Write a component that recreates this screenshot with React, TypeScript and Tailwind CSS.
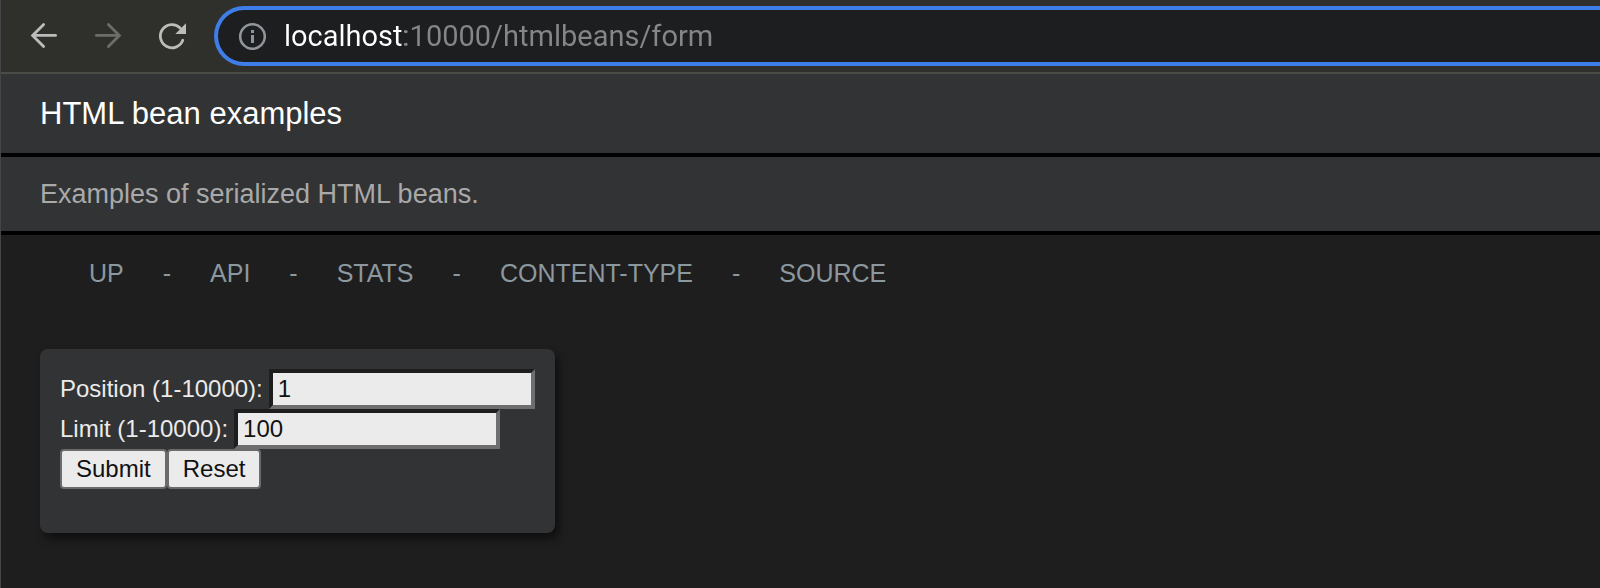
import type { ReactNode } from "react";

const links = ["UP", "API", "STATS", "CONTENT-TYPE", "SOURCE"];

function ToolbarButton({ label, className, children }: { label: string; className: string; children: ReactNode }) {
  return (
    <button type="button" aria-label={label} className={className}>
      <svg viewBox="0 0 32 32" className="size-8" fill="none" stroke="currentColor" strokeWidth="2.8" strokeLinecap="round" aria-hidden="true">
        {children}
      </svg>
    </button>
  );
}

function BrowserBar() {
  return (
    <div className="flex items-center border-b-2 border-[#4b4b48] bg-[#2f2f2c] py-[6px] pl-[27px]">
      <div className="flex shrink-0 gap-8 pr-[26px]">
        <ToolbarButton label="Back" className="text-[#bcbcbb]">
          <path d="M27.6 15.4H4.8M15.6 4.4L4.6 15.4L15.6 26.6" />
        </ToolbarButton>
        <ToolbarButton label="Forward" className="text-[#6c6c6a]">
          <path d="M4.4 15.4H27.2M16.4 4.4L27.4 15.4L16.4 26.6" />
        </ToolbarButton>
        <ToolbarButton label="Reload" className="text-[#bcbcbb]">
          <path d="M26.8 20.3A11.6 11.6 0 1 1 24.2 8" />
          <path d="M30 3.3V14H19.3Z" fill="currentColor" stroke="none" />
        </ToolbarButton>
      </div>
      <div className="flex h-15 min-w-0 flex-1 items-center gap-[18px] rounded-l-full border-4 border-r-0 border-[#3f7de8] bg-[#1d1e20] pl-5">
        <svg viewBox="0 0 28 28" className="size-7 shrink-0 text-[#8f959b]" fill="none" stroke="currentColor" strokeWidth="2.6" aria-hidden="true">
          <circle cx="14.5" cy="14.5" r="12.3" />
          <path d="M14.5 13V21M14.5 8V11" strokeWidth="3" />
        </svg>
        <input
          aria-label="Address"
          defaultValue="localhost:10000/htmlbeans/form"
          className="min-w-0 flex-1 bg-linear-to-r from-white from-[121px] to-[#868686] to-[121px] bg-clip-text font-['Roboto',sans-serif] text-[29px] leading-9 text-transparent outline-none"
        />
      </div>
    </div>
  );
}

function Field({ id, label, value }: { id: string; label: string; value: string }) {
  return (
    <div className="flex h-10 items-center gap-[6px]">
      <label htmlFor={id}>{label}</label>
      <input
        id={id}
        name={id}
        defaultValue={value}
        className="h-10 w-[266px] border-4 border-t-[#1e1e1e] border-r-[#6e6e6e] border-b-[#6e6e6e] border-l-[#1e1e1e] bg-[#ebebeb] px-[5px] text-[#111111] outline-none"
      />
    </div>
  );
}

const buttonClass = "h-10 rounded-sm border-2 border-[#6b6b6b] bg-[#ebebeb] px-[14px] text-[#111111]";

export default function App() {
  return (
    <div className="min-h-screen border-l border-[#454547] bg-[#1e1e1e] font-['Liberation_Sans',Arial,sans-serif]">
      <BrowserBar />
      <header>
        <h1 className="border-b-4 border-black bg-[#323335] px-[39px] pt-5 pb-[19px] text-[31px] leading-10 text-white">HTML bean examples</h1>
        <p className="border-b-4 border-black bg-[#323335] px-[39px] py-[19px] text-[27px] leading-9 text-[#a9a9a9]">Examples of serialized HTML beans.</p>
      </header>
      <nav className="px-[88px] pt-5 text-[25px] leading-9 text-[#8b989f]">
        <ul className="flex gap-[39px]">
          {links.map((link, i) => (
            <li key={link} className="flex gap-[39px]">
              {i > 0 && <span>-</span>}
              <a href="#">{link}</a>
            </li>
          ))}
        </ul>
      </nav>
      <main className="px-[39px] pt-[58px] pb-10">
        <form className="w-fit rounded-lg bg-[#323335] px-5 pt-5 pb-11 text-2xl text-[#ebebeb] shadow-[4px_6px_8px_rgba(0,0,0,0.5)]" onSubmit={(e) => e.preventDefault()}>
          <Field id="position" label="Position (1-10000):" value="1" />
          <Field id="limit" label="Limit (1-10000):" value="100" />
          <div className="flex">
            <button type="submit" className={buttonClass}>Submit</button>
            <button type="reset" className={buttonClass}>Reset</button>
          </div>
        </form>
      </main>
    </div>
  );
}
